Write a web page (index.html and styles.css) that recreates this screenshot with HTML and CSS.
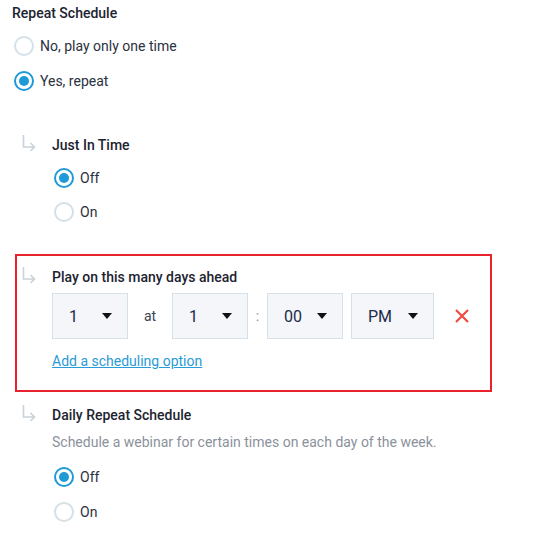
FILE: index.html
```html
<!DOCTYPE html>
<html>
<head>
<meta charset="utf-8">
<link rel="stylesheet" href="styles.css">
</head>
<body>
<div class="page">
  <div class="heading">Repeat Schedule</div>
  <div class="radio-group top">
    <label class="radio-row"><span class="radio"></span><span>No, play only one time</span></label>
    <label class="radio-row"><span class="radio checked"></span><span>Yes, repeat</span></label>
  </div>

  <div class="sub sub-jit">
    <svg class="arrow" width="14" height="16" viewBox="0 0 14 16"><path d="M1.5 0 V12 H12.5 M8.5 8 L12.5 12 L8.5 16" fill="none" stroke="#c9d2d9" stroke-width="1.6"/></svg>
    <div class="sub-body">
      <div class="title">Just In Time</div>
      <div class="radio-group">
        <label class="radio-row"><span class="radio checked"></span><span>Off</span></label>
        <label class="radio-row"><span class="radio"></span><span>On</span></label>
      </div>
    </div>
  </div>

  <div class="highlight">
    <div class="sub">
      <svg class="arrow" width="14" height="16" viewBox="0 0 14 16"><path d="M1.5 0 V12 H12.5 M8.5 8 L12.5 12 L8.5 16" fill="none" stroke="#c9d2d9" stroke-width="1.6"/></svg>
      <div class="sub-body">
        <div class="title">Play on this many days ahead</div>
        <div class="selects">
          <div class="select"><span>1</span><span class="caret"></span></div>
          <span class="sep sep-at">at</span>
          <div class="select"><span>1</span><span class="caret"></span></div>
          <span class="sep sep-colon">:</span>
          <div class="select"><span>00</span><span class="caret"></span></div>
          <div class="select select-ampm"><span>PM</span><span class="caret"></span></div>
          <svg class="remove" width="14" height="14" viewBox="0 0 14 14"><path d="M1 1 L13 13 M13 1 L1 13" stroke="#ef4b3f" stroke-width="2.2" fill="none"/></svg>
        </div>
        <a class="link" href="#">Add a scheduling option</a>
      </div>
    </div>
  </div>

  <div class="sub sub-daily">
    <svg class="arrow" width="14" height="16" viewBox="0 0 14 16"><path d="M1.5 0 V12 H12.5 M8.5 8 L12.5 12 L8.5 16" fill="none" stroke="#c9d2d9" stroke-width="1.6"/></svg>
    <div class="sub-body">
      <div class="title">Daily Repeat Schedule</div>
      <div class="desc">Schedule a webinar for certain times on each day of the week.</div>
      <div class="radio-group daily-radios">
        <label class="radio-row"><span class="radio checked"></span><span>Off</span></label>
        <label class="radio-row"><span class="radio"></span><span>On</span></label>
      </div>
    </div>
  </div>
</div>
</body>
</html>
```

FILE: styles.css
```css
* { box-sizing: border-box; }
body {
  margin: 0;
  background: #ffffff;
  font-family: Roboto, "Liberation Sans", Arial, sans-serif;
  font-size: 14px;
  color: #2a3140;
}
.page {
  padding: 4px 0 0 12px;
}
.heading, .title {
  font-weight: 500;
  color: #1d2330;
  line-height: 18px;
  font-size: 14px;
}
.title { line-height: 20px; }
.radio-group {
  display: flex;
  flex-direction: column;
}
.radio-group.top { margin-top: 6px; }
.radio-row {
  display: flex;
  align-items: center;
  height: 35px;
  gap: 6px;
  color: #2a3140;
  font-size: 14px;
}
.sub-body .radio-row { height: 34px; }
.radio {
  width: 20px;
  height: 20px;
  margin-left: 2px;
  border-radius: 50%;
  border: 2px solid #d4e0e7;
  background: #fff;
  display: flex;
  align-items: center;
  justify-content: center;
  flex: none;
}
.radio.checked { border-color: #1e9bd7; }
.radio.checked::after {
  content: "";
  width: 10px;
  height: 10px;
  border-radius: 50%;
  background: #1e9bd7;
}
.sub {
  display: flex;
  align-items: flex-start;
}
.arrow {
  flex: none;
  margin-left: 10px;
  margin-right: 16px;
}
.sub-body { display: flex; flex-direction: column; }
.sub-body .radio-group { margin-top: 6px; }
.sub-jit { margin-top: 37px; }
.highlight {
  margin-top: 25px;
  margin-left: 3px;
  width: 477px;
  border: 2px solid #e8232d;
  padding: 11px 0 19px 5px;
}
.highlight .arrow { margin-left: 0; }
.selects {
  display: flex;
  align-items: center;
  margin-top: 6px;
}
.select {
  width: 76px;
  height: 46px;
  border: 1px solid #d5e1e8;
  background: #f4f6fa;
  display: flex;
  align-items: center;
  justify-content: space-between;
  padding: 0 15px 0 16px;
  font-size: 16px;
  color: #1c2b4a;
}
.select-ampm { width: 83px; margin-left: 8px; }
.caret {
  width: 0;
  height: 0;
  border-left: 5.5px solid transparent;
  border-right: 5.5px solid transparent;
  border-top: 6px solid #111;
}
.sep {
  text-align: center;
  color: #3b4250;
  font-size: 14px;
}
.sep-at { width: 44px; }
.sep-colon { width: 19px; color: #8a909a; }
.remove { margin-left: 21px; flex: none; }
.link {
  margin-top: 12px;
  color: #2a9bd4;
  text-decoration: underline;
  line-height: 20px;
  align-self: flex-start;
}
.sub-daily { margin-top: 13px; }
.desc {
  margin-top: 7px;
  line-height: 20px;
  color: #8b919b;
}
.sub-body .daily-radios { margin-top: 7px; }
.daily-radios .radio-row { height: 35px; }
```
